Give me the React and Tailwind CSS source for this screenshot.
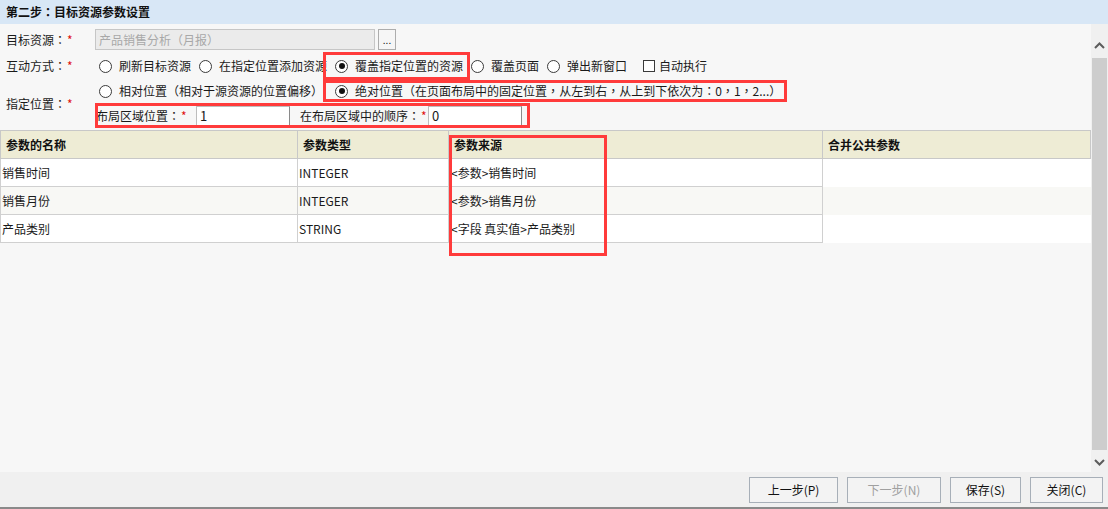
import React from "react";

const PUNCT = "：（），";
function T({ children }) {
  const s = String(children);
  const out = [];
  let buf = "";
  let k = 0;
  for (const ch of s) {
    if (PUNCT.includes(ch)) {
      if (buf) out.push(buf);
      buf = "";
      out.push(
        <span key={k++} className="font-['Noto_Sans_CJK_TC',sans-serif]">
          {ch}
        </span>
      );
    } else buf += ch;
  }
  if (buf) out.push(buf);
  return <>{out}</>;
}

function Radio({ checked }) {
  return (
    <span className="w-[13px] h-[13px] rounded-full border border-[#3a3a3a] bg-white flex items-center justify-center shrink-0">
      {checked && <span className="w-[6px] h-[6px] rounded-full bg-[#111]" />}
    </span>
  );
}

function Opt({ checked, children, extra }) {
  return (
    <span className={"flex items-center gap-[7px] mr-[8px] " + (extra || "")}>
      <Radio checked={checked} />
      <span className="whitespace-nowrap">
        <T>{children}</T>
      </span>
    </span>
  );
}

function Req() {
  return <span className="text-[#e01010] ml-[1px]">*</span>;
}

function Btn({ children, w, disabled }) {
  return (
    <div
      className={
        "h-[26px] border border-[#a7afb8] bg-[#f3f3f3] flex items-center justify-center " +
        w +
        (disabled ? " text-[#a0a0a0]" : " text-[#111]")
      }
    >
      {children}
    </div>
  );
}

function Chevron({ up }) {
  return (
    <svg width="11" height="7" viewBox="0 0 11 7">
      <polyline
        points={up ? "1,6 5.5,1.5 10,6" : "1,1 5.5,5.5 10,1"}
        fill="none"
        stroke="#5c5c5c"
        strokeWidth="2"
      />
    </svg>
  );
}

const rows = [
  ["销售时间", "INTEGER", "<参数>销售时间", "bg-white"],
  ["销售月份", "INTEGER", "<参数>销售月份", "bg-[#f8f8f5]"],
  ["产品类别", "STRING", "<字段 真实值>产品类别", "bg-white"],
];

export default function App() {
  return (
    <div className="w-[1108px] h-[509px] flex flex-col overflow-hidden bg-[#f7f7f7] text-[12px] text-[#1a1a1a] font-['Noto_Sans_CJK_SC',sans-serif] leading-none">
      {/* title */}
      <div className="h-[24px] shrink-0 bg-[#d8e7f6] flex items-center pl-[6px] font-bold text-[#111]">
        <T>第二步：目标资源参数设置</T>
      </div>

      {/* middle */}
      <div className="flex-1 flex min-h-0">
        <div className="flex-1 relative overflow-hidden">
          {/* row 1 */}
          <div className="pl-[6px] pt-[5px]">
            <div className="flex h-[21px] items-center">
              <div className="w-[89px] whitespace-nowrap">
                <T>目标资源：</T>
                <Req />
              </div>
              <div className="w-[280px] h-[21px] bg-[#ebebeb] border border-[#c6c6c6] flex items-center pl-[3px] text-[#a8a8a8] whitespace-nowrap">
                <T>产品销售分析（月报）</T>
              </div>
              <div className="ml-[3px] w-[18px] h-[21px] bg-[#f6f6f6] border border-[#adadad] flex items-end justify-center pb-[4px] text-[10px]">
                ...
              </div>
            </div>
          </div>

          {/* rows 2-4 */}
          <div className="flex mt-[2px]">
            <div className="w-[95px] pl-[6px] flex flex-col shrink-0">
              <div className="h-[28px] flex items-center whitespace-nowrap">
                <T>互动方式：</T>
                <Req />
              </div>
              <div className="mt-[16px] h-[16px] flex items-center whitespace-nowrap">
                <T>指定位置：</T>
                <Req />
              </div>
            </div>
            <div className="flex flex-col">
              <div className="h-[28px] flex items-center pl-[4px]">
                <Opt>刷新目标资源</Opt>
                <Opt>在指定位置添加资源</Opt>
                <Opt checked>覆盖指定位置的资源</Opt>
                <Opt>覆盖页面</Opt>
                <Opt>弹出新窗口</Opt>
                <span className="flex items-center gap-[4px] ml-[8px]">
                  <span className="w-[12px] h-[12px] border border-[#3a3a3a] bg-white" />
                  <span className="whitespace-nowrap">自动执行</span>
                </span>
              </div>
              <div className="h-[22px] flex items-center pl-[4px]">
                <Opt>相对位置（相对于源资源的位置偏移）</Opt>
                <Opt checked extra="ml-[4px]">
                  绝对位置（在页面布局中的固定位置，从左到右，从上到下依次为：0，1，2...）
                </Opt>
              </div>
              <div className="h-[25px] mt-[1px] flex items-center pl-[1px]">
                <div className="w-[100px] whitespace-nowrap">
                  <T>布局区域位置：</T>
                  <Req />
                </div>
                <div className="w-[94px] h-[20px] bg-white border border-[#bdbdbd] border-r-[#8a8a8a] border-b-[#8a8a8a] flex items-center pl-[3px] text-[13px]">
                  1
                </div>
                <div className="ml-[10px] w-[128px] whitespace-nowrap">
                  <T>在布局区域中的顺序：</T>
                  <Req />
                </div>
                <div className="w-[94px] h-[20px] bg-white border border-[#bdbdbd] border-r-[#8a8a8a] border-b-[#8a8a8a] flex items-center pl-[3px] text-[13px]">
                  0
                </div>
              </div>
            </div>
          </div>

          {/* table */}
          <div className="mt-[2px] w-[1091px]">
            <div className="flex h-[29px] bg-[#eeecd5] border border-[#c8c8c8] font-bold text-[#111]">
              <div className="w-[297px] border-r border-[#c8c8c8] flex items-center pl-[5px]">参数的名称</div>
              <div className="w-[151px] border-r border-[#c8c8c8] flex items-center pl-[5px]">参数类型</div>
              <div className="w-[374px] border-r border-[#c8c8c8] flex items-center pl-[5px]">参数来源</div>
              <div className="flex-1 flex items-center pl-[5px]">合并公共参数</div>
            </div>
            {rows.map((r, i) => (
              <div key={i} className={"flex h-[28px] border-l border-[#d0d0d0] " + r[3]}>
                <div className="w-[297px] border-r border-b border-[#d0d0d0] flex items-center pl-[1px]">{r[0]}</div>
                <div className="w-[151px] border-r border-b border-[#d0d0d0] flex items-center pl-[1px]">{r[1]}</div>
                <div className="w-[374px] border-r border-b border-[#d0d0d0] flex items-center pl-[2px]">{r[2]}</div>
                <div className="flex-1" />
              </div>
            ))}
          </div>

          {/* red annotation boxes */}
          <div className="absolute left-[323px] top-[28px] w-[147px] h-[28px] border-[3px] border-[#ff3b3b] pointer-events-none" />
          <div className="absolute left-[323px] top-[56px] w-[464px] h-[22px] border-[3px] border-[#ff3b3b] pointer-events-none" />
          <div className="absolute left-[95px] top-[79px] w-[435px] h-[25px] border-[3px] border-[#ff3b3b] pointer-events-none" />
          <div className="absolute left-[449px] top-[111px] w-[158px] h-[121px] border-[3px] border-[#ff3b3b] pointer-events-none" />
        </div>

        {/* scrollbar */}
        <div className="w-[17px] shrink-0 bg-[#f0f0f0] flex flex-col">
          <div className="h-[34px] flex items-end justify-center pb-[9px]">
            <Chevron up />
          </div>
          <div className="flex-1 mx-[1px] bg-[#cdcdcd]" />
          <div className="h-[22px] flex items-center justify-center pt-[2px]">
            <Chevron />
          </div>
        </div>
      </div>

      {/* footer */}
      <div className="h-[37px] shrink-0 bg-[#f0f0f0] border-b-2 border-[#8a8a8a] flex justify-end items-start pt-[5px] pr-[5px] gap-[9px]">
        <Btn w="w-[89px]">上一步(P)</Btn>
        <Btn w="w-[94px]" disabled>下一步(N)</Btn>
        <Btn w="w-[71px]">保存(S)</Btn>
        <Btn w="w-[73px]">关闭(C)</Btn>
      </div>
    </div>
  );
}
